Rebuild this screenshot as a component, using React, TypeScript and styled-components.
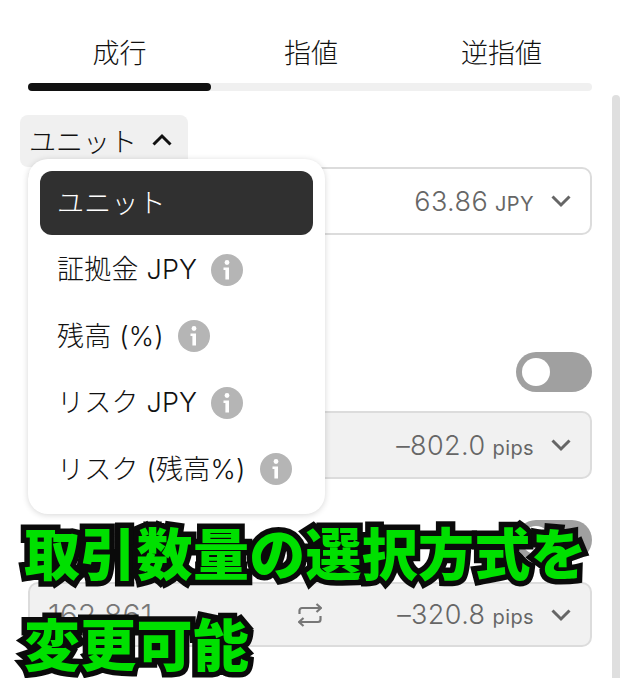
import React from "react";
import styled, { createGlobalStyle } from "styled-components";

const GlobalStyle = createGlobalStyle`
  html, body {
    margin: 0;
    height: 100%;
    background: #fff;
    overflow: hidden;
  }
  body {
    font-family: "Inter", "Noto Sans CJK JP", sans-serif;
    color: #222;
  }
`;

const Page = styled.div`
  position: relative;
  width: 624px;
  height: 678px;
  overflow: hidden;
  box-sizing: border-box;
  padding: 0 32px 0 28px;
`;

const Tabs = styled.div`
  display: grid;
  grid-template-columns: 183px 200px 181px;
  height: 83px;
  padding-top: 36px;
  box-sizing: border-box;
`;

const Tab = styled.div`
  text-align: center;
  font-size: 27px;
  line-height: 35px;
  font-weight: 300;
  color: #111;
`;

const Track = styled.div`
  height: 8px;
  border-radius: 4px;
  background: #f0f0f0;
`;

const TrackFill = styled.div`
  width: 183px;
  height: 8px;
  border-radius: 4px;
  background: #111;
`;

const ScrollRail = styled.div`
  position: absolute;
  top: 95px;
  right: 4px;
  bottom: 0;
  width: 8px;
  border-radius: 4px 4px 0 0;
  background: #dfdfdf;
`;

const UnitButton = styled.div`
  display: flex;
  align-items: center;
  gap: 14px;
  margin: 24px 0 0 -8px;
  width: 168px;
  height: 52px;
  box-sizing: border-box;
  padding: 0 0 2px 9px;
  border-radius: 8px;
  background: #f0f0f0;
  font-size: 27px;
  font-weight: 300;
  color: #111;
`;

const Field = styled.div<{ $muted?: boolean; $top: number; $height: number }>`
  display: flex;
  align-items: center;
  justify-content: space-between;
  height: ${(p) => p.$height}px;
  margin-top: ${(p) => p.$top}px;
  box-sizing: border-box;
  padding: 0 18px;
  border: 2px solid #dcdcdc;
  border-radius: 10px;
  background: ${(p) => (p.$muted ? "#f1f1f1" : "#fff")};
  color: #777;
`;

const FieldLeft = styled.span`
  font-size: 30px;
  font-weight: 300;
  color: #777;
`;

const FieldRight = styled.span`
  display: flex;
  align-items: center;
  gap: 16px;
  margin-left: auto;
`;

const Amount = styled.span`
  font-size: 27px;
  font-weight: 300;
  letter-spacing: 0.4px;
  color: #666;
`;

const UnitSuffix = styled.span`
  font-size: 20px;
  font-weight: 400;
  margin-left: 7px;
`;

const SwapIcon = styled.span`
  display: flex;
  margin-left: 146px;
  margin-right: auto;
  color: #777;
`;

const SwitchRow = styled.div<{ $top: number }>`
  display: flex;
  justify-content: flex-end;
  margin-top: ${(p) => p.$top}px;
`;

const Switch = styled.div`
  display: flex;
  align-items: center;
  width: 76px;
  height: 40px;
  box-sizing: border-box;
  padding-left: 6px;
  border-radius: 20px;
  background: #a0a0a0;
`;

const Knob = styled.div`
  width: 28px;
  height: 28px;
  border-radius: 50%;
  background: #fff;
`;

const Menu = styled.div`
  position: absolute;
  left: 28px;
  top: 159px;
  width: 297px;
  height: 355px;
  box-sizing: border-box;
  padding: 12px;
  border-radius: 20px;
  background: #fff;
  box-shadow: 0 1px 6px rgba(0, 0, 0, 0.16);
`;

const MenuItem = styled.div<{ $active?: boolean }>`
  display: flex;
  align-items: center;
  gap: 14px;
  height: 64px;
  margin-bottom: 2.6px;
  padding-left: 17px;
  border-radius: 12px;
  font-size: 27px;
  font-weight: 300;
  letter-spacing: 0.2px;
  background: ${(p) => (p.$active ? "#303030" : "transparent")};
  color: ${(p) => (p.$active ? "#fff" : "#111")};
`;

const MenuLabel = styled.span`
  position: relative;
  top: -2px;
`;

const InfoBadge = styled.svg`
  flex: none;
`;

const Caption = styled.div`
  position: absolute;
  left: 24px;
  top: 505px;
  width: 580px;
  font-family: "Noto Sans CJK JP", sans-serif;
  font-size: 56px;
  line-height: 91px;
  font-weight: 900;
  letter-spacing: 0.3px;
  color: #00e000;
  -webkit-text-stroke: 11px #0a0a0a;
  paint-order: stroke fill;
`;

const Chevron = ({ up, color }: { up?: boolean; color: string }) => (
  <svg width="22" height="14" viewBox="0 0 22 14" fill="none">
    <path
      d={up ? "M2.5 11.5 11 3l8.5 8.5" : "M2.5 2.5 11 11l8.5-8.5"}
      stroke={color}
      strokeWidth="3"
    />
  </svg>
);

const Info = () => (
  <InfoBadge width="32" height="32" viewBox="0 0 32 32">
    <circle cx="16" cy="16" r="16" fill="#b5b5b5" />
    <circle cx="16" cy="8.5" r="2.4" fill="#fff" />
    <path d="M12.5 13.5h5.5v12h-3.6v-9.6h-1.9z" fill="#fff" />
  </InfoBadge>
);

const Swap = () => (
  <svg width="24" height="24" viewBox="0 0 24 24" fill="none" stroke="currentColor" strokeWidth="2.2">
    <path d="M1.5 11V7.5a2.5 2.5 0 0 1 2.5-2.5h19M18.5 1l4.5 4-4.5 4" />
    <path d="M22.5 13v3.5a2.5 2.5 0 0 1-2.5 2.5H1M5.5 15 1 19l4.5 4" />
  </svg>
);

const menuItems = ["証拠金 JPY", "残高 (%)", "リスク JPY", "リスク (残高%)"];

export default function App() {
  return (
    <Page>
      <GlobalStyle />
      <Tabs>
        <Tab>成行</Tab>
        <Tab>指値</Tab>
        <Tab>逆指値</Tab>
      </Tabs>
      <Track>
        <TrackFill />
      </Track>
      <UnitButton>
        ユニット
        <Chevron up color="#111" />
      </UnitButton>
      <Field $top={0} $height={68}>
        <FieldRight>
          <Amount>
            63.86<UnitSuffix>JPY</UnitSuffix>
          </Amount>
          <Chevron color="#666" />
        </FieldRight>
      </Field>
      <SwitchRow $top={117}>
        <Switch>
          <Knob />
        </Switch>
      </SwitchRow>
      <Field $muted $top={19} $height={68}>
        <FieldRight>
          <Amount>
            –802.0<UnitSuffix>pips</UnitSuffix>
          </Amount>
          <Chevron color="#666" />
        </FieldRight>
      </Field>
      <SwitchRow $top={41}>
        <Switch>
          <Knob />
        </Switch>
      </SwitchRow>
      <Field $muted $top={22} $height={65}>
        <FieldLeft>162.861</FieldLeft>
        <SwapIcon>
          <Swap />
        </SwapIcon>
        <FieldRight>
          <Amount>
            –320.8<UnitSuffix>pips</UnitSuffix>
          </Amount>
          <Chevron color="#666" />
        </FieldRight>
      </Field>
      <ScrollRail />
      <Menu>
        <MenuItem $active>
          <MenuLabel>ユニット</MenuLabel>
        </MenuItem>
        {menuItems.map((label) => (
          <MenuItem key={label}>
            <MenuLabel>{label}</MenuLabel>
            <Info />
          </MenuItem>
        ))}
      </Menu>
      <Caption>
        取引数量の選択方式を
        <br />
        変更可能
      </Caption>
    </Page>
  );
}
